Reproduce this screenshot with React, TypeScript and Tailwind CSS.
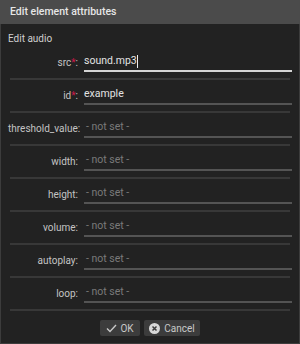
import React from 'react';

const fields = [
  { name: 'src', required: true, value: 'sound.mp3', focused: true },
  { name: 'id', required: true, value: 'example' },
  { name: 'threshold_value' },
  { name: 'width' },
  { name: 'height' },
  { name: 'volume' },
  { name: 'autoplay' },
  { name: 'loop' },
];

type Field = { name: string; required?: boolean; value?: string; focused?: boolean };

function Row({ field }: { field: Field }) {
  return (
    <div>
      <div className="flex items-center pt-[5px] pb-[6px]">
        <div className="w-[70px] shrink-0 text-right text-[10px] text-[#c4c4c4] whitespace-nowrap">
          {field.name}
          {field.required && <span className="text-[#d0184a]">*</span>}:
        </div>
        <div
          className={
            'ml-[6px] flex-1 h-[20px] flex items-center border-b-2 text-[10.5px] ' +
            (field.focused ? 'border-[#d4d4d4]' : 'border-[#545454]')
          }
        >
          {field.value ? (
            <span className="text-[#e2e2e2]">{field.value}</span>
          ) : (
            <span className="text-[#7a7a7a] pl-[2px]">- not set -</span>
          )}
          {field.focused && <span className="inline-block w-px h-[13px] bg-[#eeeeee]" />}
        </div>
      </div>
      <div className="mx-[2px] h-[2px] bg-[#383838]" />
    </div>
  );
}

export default function App() {
  return (
    <div className="w-[300px] h-[344px] flex flex-col bg-[#222222] font-['Roboto',sans-serif]">
      <div className="h-[24px] shrink-0 flex items-center px-[10px] bg-[#4b4b4b] text-[10.5px] font-medium text-[#e6e6e6]">
        Edit element attributes
      </div>
      <div className="flex-1 flex flex-col border-x border-b border-[#3c3c3c]">
        <div className="px-[7px] pt-[8px] h-[23px] text-[10px] text-[#d0d0d0] leading-[14px]">
          Edit audio
        </div>
        <div className="px-[7px]">
          {fields.map((f) => (
            <Row key={f.name} field={f} />
          ))}
        </div>
        <div className="flex justify-center gap-[4px] pt-[9px]">
          <button className="h-[16px] w-[40px] flex items-center justify-center gap-[3px] rounded-[2px] bg-[#3c3c3c] text-[10px] text-[#c8c8c8]">
            <svg width="11" height="9" viewBox="0 0 11 9">
              <path d="M1 4.5 L4 7.5 L10 1" fill="none" stroke="#c8c8c8" strokeWidth="1.4" />
            </svg>
            OK
          </button>
          <button className="h-[16px] w-[56px] flex items-center justify-center gap-[4px] rounded-[2px] bg-[#3c3c3c] text-[10px] text-[#c8c8c8]">
            <svg width="11" height="11" viewBox="0 0 11 11">
              <circle cx="5.5" cy="5.5" r="5.5" fill="#d8d8d8" />
              <path d="M3.5 3.5 L7.5 7.5 M7.5 3.5 L3.5 7.5" stroke="#3c3c3c" strokeWidth="1.5" />
            </svg>
            Cancel
          </button>
        </div>
      </div>
    </div>
  );
}
